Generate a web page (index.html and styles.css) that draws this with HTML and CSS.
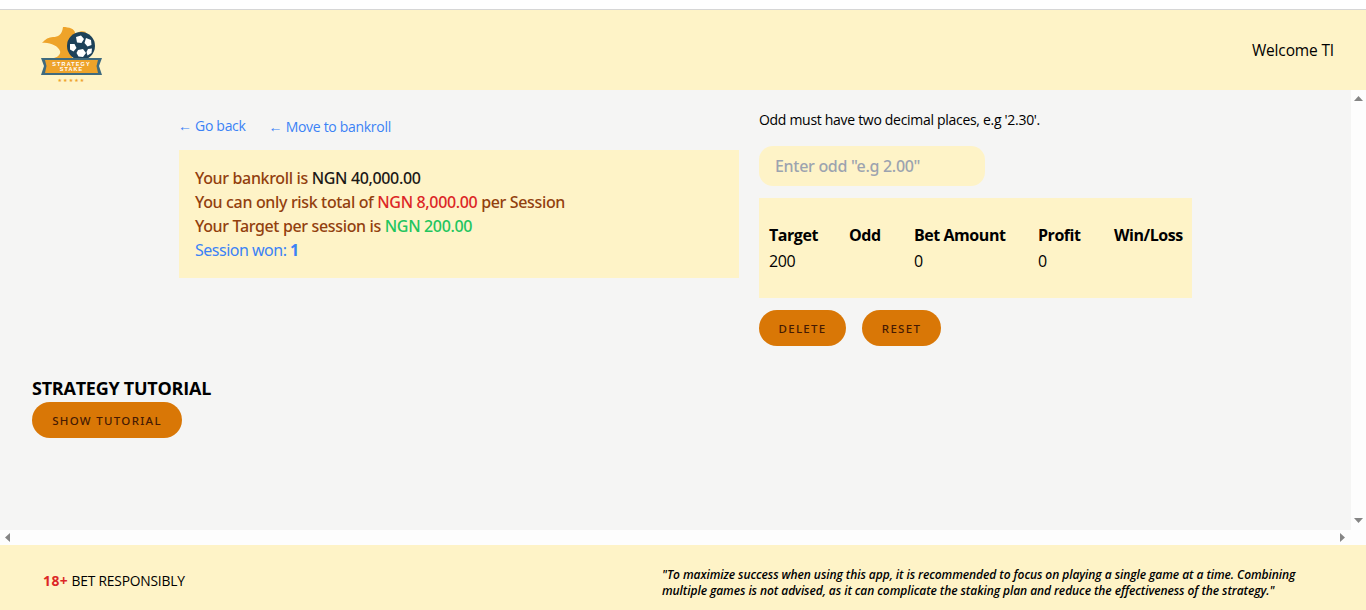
FILE: index.html
```html
<!DOCTYPE html>
<html lang="en">
<head>
<meta charset="utf-8">
<title>Strategy Stake</title>
<link rel="stylesheet" href="styles.css">
</head>
<body>
<div class="page">
  <header class="header">
    <svg class="logo" viewBox="0 0 64 58" width="64" height="58" aria-label="Strategy Stake logo">
      <path class="flame" d="M2 17C5 13 9 11 13 11C18 11 22 9 23 1C29 1 35 3 35 7C35 9 34.500 10 34 11C36 7 40 4 46 6L32 32H14C18 31 21 28 20 25C18 20 10 16 2 17Z"/>
      <circle class="ball" cx="41" cy="20" r="14"/>
      <path class="patch" d="M36 11L41 9.500L44 13L41.500 17L37 16.500ZM46 12L51 14L51.500 19L47.500 20.500L44.500 17ZM30 18L34.500 18L36.500 22L33.500 25.500L30 23.500ZM38 24L43 23L46 27L43 31L38.500 30.500L36.500 27ZM48 23L52 22.500L51.500 27L47.500 29.500L46.500 26Z"/>
      <path class="ribbon-edge" d="M1 32H62L59 40L62 49H1L4 40Z"/>
      <path class="ribbon" d="M5 34H58L56.500 40L58 47H5L6.500 40Z"/>
      <text class="logo-text" x="31.500" y="39.800">STRATEGY</text>
      <text class="logo-text" x="31.500" y="45.200">STAKE</text>
      <text class="logo-stars" x="31.500" y="55.500">★★★★★</text>
    </svg>
    <span class="welcome">Welcome TI</span>
  </header>
  <div class="middle">
    <div class="viewport">
      <main class="main">
        <div class="columns">
          <section class="left">
            <nav class="links">
              <a class="link" href="#">← Go back</a>
              <a class="link link-second" href="#">← Move to bankroll</a>
            </nav>
            <div class="summary">
              <p>Your bankroll is <strong class="dark">NGN 40,000.00</strong></p>
              <p>You can only risk total of <strong class="red">NGN 8,000.00</strong> per Session</p>
              <p>Your Target per session is <strong class="green">NGN 200.00</strong></p>
              <p class="blue">Session won: <b>1</b></p>
            </div>
          </section>
          <section class="right">
            <p class="note">Odd must have two decimal places, e.g '2.30'.</p>
            <input class="odd-input" type="text" placeholder="Enter odd &quot;e.g 2.00&quot;">
            <div class="table-box">
              <table class="bets">
                <thead>
                  <tr><th class="c1">Target</th><th class="c2">Odd</th><th class="c3">Bet Amount</th><th class="c4">Profit</th><th class="c5">Win/Loss</th></tr>
                </thead>
                <tbody>
                  <tr><td>200</td><td></td><td>0</td><td>0</td><td></td></tr>
                </tbody>
              </table>
            </div>
            <div class="actions">
              <button class="btn btn-delete" type="button">DELETE</button>
              <button class="btn btn-reset" type="button">RESET</button>
            </div>
          </section>
        </div>
        <section class="tutorial">
          <h2 class="tutorial-title">STRATEGY TUTORIAL</h2>
          <button class="btn btn-show" type="button">SHOW TUTORIAL</button>
        </section>
      </main>
      <div class="vbar">
        <svg class="arrow" width="9" height="5" viewBox="0 0 9 5"><path d="M4.500 0L9 5H0Z"/></svg>
        <svg class="arrow" width="9" height="5" viewBox="0 0 9 5"><path d="M0 0H9L4.500 5Z"/></svg>
      </div>
    </div>
    <div class="hbar">
      <svg class="arrow" width="5" height="9" viewBox="0 0 5 9"><path d="M5 0V9L0 4.500Z"/></svg>
      <svg class="arrow" width="5" height="9" viewBox="0 0 5 9"><path d="M0 0L5 4.500L0 9Z"/></svg>
    </div>
  </div>
  <footer class="footer">
    <p class="responsible"><b class="age">18+</b> BET RESPONSIBLY</p>
    <p class="quote">"To maximize success when using this app, it is recommended to focus on playing a single game at a time. Combining multiple games is not advised, as it can complicate the staking plan and reduce the effectiveness of the strategy."</p>
  </footer>
</div>
</body>
</html>
```
FILE: styles.css
```css
* { box-sizing: border-box; }
html, body { margin: 0; height: 100%; overflow: hidden; }
body {
  font-family: "Open Sans", "Noto Sans", "Liberation Sans", sans-serif;
  font-size: 16px;
  color: #000;
  background: #fff;
}
p { margin: 0; }
.page { height: 610px; display: flex; flex-direction: column; padding-top: 9px; }
.header {
  height: 81px;
  flex: none;
  display: flex;
  align-items: flex-start;
  justify-content: space-between;
  padding: 16px 32px 0 40px;
  background: #fef3c7;
  border-top: 1px solid #d6d6d6;
}
.logo { display: block; }
.flame { fill: #eea32a; }
.ball { fill: #1d4159; }
.patch { fill: #fff; }
.ribbon-edge { fill: #3f6a7e; }
.ribbon { fill: #eea32a; }
.logo-text { font: 700 5.500px "Liberation Sans", sans-serif; fill: #fff; text-anchor: middle; letter-spacing: 1.100px; }
.logo-stars { font: 5px "DejaVu Sans", sans-serif; fill: #eea32a; text-anchor: middle; letter-spacing: 1.100px; }
.welcome { font-size: 15.500px; letter-spacing: -.15px; margin-top: 13px; }
.middle { flex: 1; display: flex; flex-direction: column; min-height: 0; }
.viewport { flex: 1; display: flex; min-height: 0; }
.main { flex: 1; background: #f5f5f4; padding: 27px 32px 0; min-width: 0; }
.columns { display: flex; gap: 20px; padding-left: 147px; }
.left { width: 560px; flex: none; }
.right { width: 433px; flex: none; margin-top: -7px; }
.links { display: flex; gap: 23px; height: 33px; align-items: flex-start; margin-left: -1px; }
.link { color: #3b82f6; text-decoration: none; font-size: 14px; letter-spacing: -.3px; line-height: 18px; }
.link-second { margin-top: 1px; }
.summary { background: #fef3c7; padding: 16px; color: #92400e; font-family: "Noto Sans", sans-serif; font-size: 16px; font-weight: 500; line-height: 24px; letter-spacing: -.35px; }
.dark { font-weight: 500; color: #1c1917; }
.red { font-weight: 500; color: #dc2626; }
.green { font-weight: 500; color: #22c55e; }
.blue { color: #3b82f6; font-weight: 400; letter-spacing: -.5px; }
.blue b { font-weight: 700; }
.note { font-size: 14px; line-height: 20px; letter-spacing: -.3px; }
.odd-input {
  display: block;
  width: 226px;
  height: 40px;
  margin-top: 16px;
  padding: 0 16px;
  border: 0;
  border-radius: 14px;
  background: #fef3c7;
  font: 500 16px "Noto Sans", sans-serif;
  letter-spacing: -.3px;
}
.odd-input::placeholder { color: #9ca3af; opacity: 1; }
.table-box { height: 100px; margin-top: 12px; background: #fef3c7; padding: 24px 0 0 10px; }
.bets { border-collapse: collapse; table-layout: fixed; width: 423px; font-size: 16px; letter-spacing: -.45px; }
.bets th { text-align: left; font-weight: 700; padding: 0; height: 25px; }
.bets td { padding: 0; height: 27px; }
.c1 { width: 80px; }
.c2 { width: 65px; }
.c3 { width: 124px; }
.c4 { width: 76px; }
.c5 { width: 78px; }
.actions { display: flex; gap: 16px; margin-top: 12px; }
.btn {
  height: 36px;
  border: 0;
  border-radius: 18px;
  background: #d97706;
  color: #451a03;
  font: 500 11.500px "Noto Sans", sans-serif;
  letter-spacing: 1.300px;
  padding: 0;
}
.btn-delete { width: 87px; }
.btn-reset { width: 79px; }
.btn-show { width: 150px; display: block; margin-top: 2px; }
.tutorial { margin-top: 30px; }
.tutorial-title { margin: 0; font-size: 18px; line-height: 24px; font-weight: 700; letter-spacing: -.25px; }
.vbar { width: 15px; flex: none; background: #fdfdfd; display: flex; flex-direction: column; justify-content: space-between; align-items: center; padding: 6px 0 7px; }
.hbar { height: 15px; flex: none; background: #fdfdfd; display: flex; justify-content: space-between; align-items: center; padding: 0 21px 0 5px; }
.arrow { display: block; fill: #858585; }
.footer { height: 65px; flex: none; background: #fef3c7; display: flex; align-items: center; padding: 5px 0 0 43px; }
.responsible { width: 619px; flex: none; font-size: 13.800px; letter-spacing: -.2px; }
.age { color: #dc2626; font-weight: 700; letter-spacing: .5px; }
.quote { width: 645px; flex: none; font-size: 12px; line-height: 16px; font-style: italic; font-weight: 600; letter-spacing: -.07px; margin-top: 6px; }
```
